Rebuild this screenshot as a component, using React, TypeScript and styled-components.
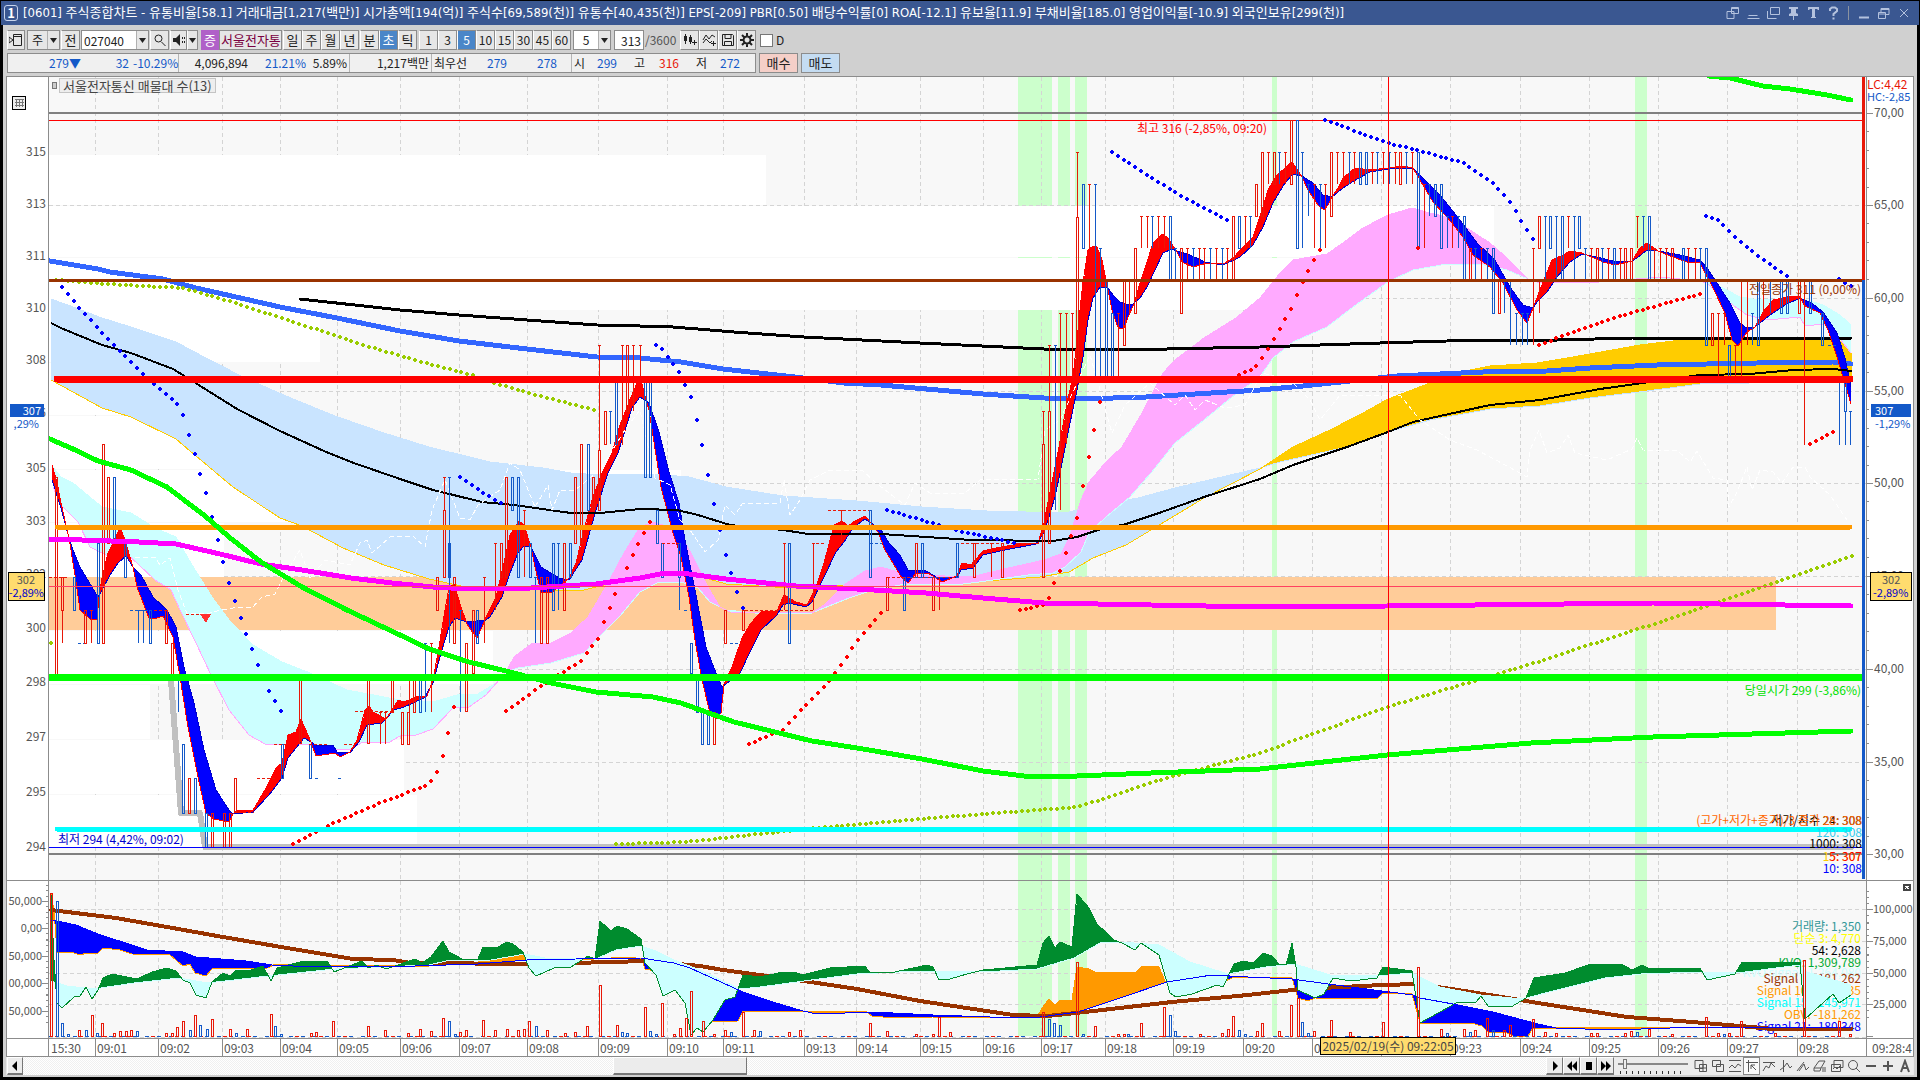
import React from "react";
import styled, { createGlobalStyle, css } from "styled-components";

/* ---------- theme ---------- */

const FONT = `"Noto Sans CJK KR", "Liberation Sans", sans-serif`;
const TITLE_FONT = `"DejaVu Sans Condensed", "Noto Sans CJK KR", sans-serif`;

const c = {
  title: "#3a5791",
  face: "#d0d0d0",
  button: "#e6e6e6",
  line: "#8c8c8c",
  up: "#e81808",
  down: "#1459c8",
  text: "#222222",
  axis: "#555555",
  plot: "#f8f8f8",
  grid: "#d4d4d4",
  active: "#4a86c8",
};

const GlobalStyle = createGlobalStyle`
  * { box-sizing: border-box; }
  body { margin: 0; background: #000; }
  button, input, select { font: inherit; color: inherit; margin: 0; padding: 0; }
`;

/* ---------- window shell ---------- */

const Shell = styled.div`
  height: 100vh;
  min-height: 480px;
  display: flex;
  flex-direction: column;
  padding: 1px 1px 3px;
  background: #000;
  color: ${c.text};
  font: 13px/16px ${FONT};
  overflow: hidden;
`;

const TitleBar = styled.header`
  display: flex;
  align-items: center;
  height: 24px;
  flex: none;
  padding: 0 8px 0 3px;
  background: ${c.title};
  color: #fff;
`;

const TitleBadge = styled.span`
  width: 14px;
  height: 16px;
  margin-right: 5px;
  border: 1px solid #c8d4ec;
  border-radius: 3px;
  text-align: center;
  line-height: 14px;
  font-weight: 700;
`;

const TitleText = styled.h1`
  flex: 1;
  min-width: 0;
  margin: 0;
  white-space: pre;
  font: 13px/20px ${TITLE_FONT};
`;

const TitleIcons = styled.div`
  display: flex;
  align-items: center;
  gap: 6px;
`;

const TitleButton = styled.button`
  display: grid;
  place-items: center;
  width: 14px;
  height: 16px;
  border: 0;
  background: none;
  color: #b4c2de;
`;

const TitleDivider = styled.span`
  width: 1px;
  height: 14px;
  margin: 0 2px;
  background: #8b93a0;
`;

const Body = styled.main`
  flex: 1;
  min-height: 0;
  display: flex;
  flex-direction: column;
  margin: 0 2px;
  padding: 5px 3px 2px;
  background: ${c.face};
`;

/* ---------- toolbar ---------- */

const Toolbar = styled.div`
  display: flex;
  flex: none;
  height: 20px;
  padding-left: 1px;
  white-space: nowrap;
`;

const Group = styled.div<{ $gap?: number }>`
  display: flex;
  margin-right: ${(p) => p.$gap ?? 1}px;
`;

const ToolButton = styled.button<{ $w?: number; $on?: boolean; $small?: boolean }>`
  display: grid;
  place-items: center;
  width: ${(p) => p.$w ?? 19}px;
  height: 20px;
  border: 1px solid ${c.line};
  border-left-color: #fff;
  background: ${(p) => (p.$on ? c.active : c.button)};
  color: ${(p) => (p.$on ? "#fff" : c.text)};
  font-size: ${(p) => (p.$small ? 12 : 13)}px;
  line-height: 18px;
`;

const Combo = styled.div<{ $w: number; $plain?: boolean }>`
  display: flex;
  width: ${(p) => p.$w}px;
  height: 20px;
  border: 1px solid ${c.line};
  background: ${(p) => (p.$plain ? c.button : "#fff")};
  font-size: 12px;
`;

const field = css`
  flex: 1;
  min-width: 0;
  width: 0;
  height: 18px;
  border: 0;
  outline: 0;
  background: transparent;
  appearance: none;
`;

const TextField = styled.input<{ $align?: string }>`
  ${field}
  padding: 0 2px;
  text-align: ${(p) => p.$align ?? "left"};
`;

const Select = styled.select`
  ${field}
  text-align: center;
  text-align-last: center;
`;

const ArrowBox = styled.span`
  display: grid;
  place-items: center;
  width: 12px;
  border-left: 1px solid #b0b0b0;
  background: ${c.button};
`;

const ArrowButton = styled(ArrowBox).attrs({ as: "button" })`
  border-width: 0 0 0 1px;
`;

const StockMark = styled.span`
  width: 18px;
  height: 20px;
  background: #b060c8;
  color: #fff;
  text-align: center;
  line-height: 20px;
`;

const StockName = styled.span`
  width: 63px;
  height: 20px;
  overflow: hidden;
  border: 1px solid ${c.line};
  padding-left: 1px;
  background: ${c.button};
  color: #7a0040;
  line-height: 18px;
`;

const CountSuffix = styled.span`
  width: 36px;
  padding-left: 1px;
  color: #555;
  font-size: 12px;
  line-height: 20px;
`;

const Check = styled.label`
  display: flex;
  align-items: center;
  gap: 3px;
  font-size: 12px;
`;

const CheckBox = styled.input`
  appearance: none;
  width: 13px;
  height: 13px;
  border: 1px solid #777;
  background: #fff;
`;

/* ---------- quote row ---------- */

const QuoteRow = styled.div`
  display: flex;
  flex: none;
  gap: 3px;
  height: 20px;
  margin: 3px 0;
  padding-left: 1px;
  white-space: nowrap;
`;

const QuoteBox = styled.div`
  display: flex;
  width: 749px;
  border: 1px solid ${c.line};
  background: #f0f0f0;
  font-size: 12px;
  line-height: 18px;
`;

const QuoteCell = styled.span<{ $w: number; $color?: string; $left?: boolean; $sep?: boolean }>`
  width: ${(p) => p.$w}px;
  color: ${(p) => p.$color ?? c.text};
  text-align: ${(p) => (p.$left ? "left" : "right")};
  padding: 0 2px;
  border-right: ${(p) => (p.$sep ? `1px solid #b4b4b4` : "0")};
`;

const OrderButton = styled.button<{ $bg: string }>`
  width: 39px;
  border: 1px solid ${c.line};
  background: ${(p) => p.$bg};
  line-height: 18px;
`;

/* ---------- chart frame ---------- */

const Frame = styled.section`
  position: relative;
  flex: 1;
  min-height: 0;
  display: grid;
  grid-template-columns: 41px minmax(0, 1fr) 46px;
  grid-template-rows: minmax(0, 803fr) minmax(0, 157fr) 17px;
  gap: 1px;
  border: 1px solid ${c.line};
  background: ${c.line};
`;

const Drawing = styled.svg<{ $bg?: string; $size?: number }>`
  display: block;
  width: 100%;
  height: 100%;
  background: ${(p) => p.$bg ?? "#fff"};
  font: ${(p) => p.$size ?? 12}px ${FONT};
`;

const TagText = styled.text`
  font-size: 11px;
`;

const AxisCorner = styled.div`
  background: #fff;
`;

const TimeAxis = styled.div<{ $columns: string }>`
  display: grid;
  grid-template-columns: ${(p) => p.$columns};
  min-width: 0;
  background: #fff;
  color: ${c.axis};
  font-size: 12px;
`;

const TimeCell = styled.span<{ $first?: boolean }>`
  min-width: 0;
  padding-left: ${(p) => (p.$first ? 2 : 1)}px;
  border-left: ${(p) => (p.$first ? "0" : `1px solid ${c.line}`)};
  line-height: 17px;
`;

const TimeEnd = styled.div`
  padding-left: 5px;
  background: #fff;
  color: ${c.axis};
  font-size: 12px;
  line-height: 17px;
`;

const CursorTime = styled.div`
  position: absolute;
  bottom: 1px;
  left: 1313px;
  width: 136px;
  height: 18px;
  border: 1px solid #000;
  background: #ffdc6e;
  color: #444;
  font-size: 12px;
  line-height: 16px;
  text-align: center;
  white-space: nowrap;
`;

/* ---------- bottom bar ---------- */

const BottomBar = styled.footer`
  display: flex;
  flex: none;
  height: 18px;
  padding: 0 1px;
  background: #e8e8e8;
`;

const BevelButton = styled.button<{ $w?: number }>`
  display: grid;
  place-items: center;
  width: ${(p) => p.$w ?? 17}px;
  height: 18px;
  border: 1px solid #fff;
  border-right-color: #777;
  border-bottom: 2px solid #777;
  background: #ececec;
  color: #000;
`;

const Track = styled.div`
  display: flex;
  flex: 1;
  min-width: 0;
  background: repeating-conic-gradient(#fff 0 25%, #f0f0f0 0 50%) 0 0 / 2px 2px;
`;

const TrackSpace = styled.div<{ $grow: number }>`
  flex: ${(p) => p.$grow} 0 0;
`;

const Thumb = styled(BevelButton)`
  flex: 132 0 0;
`;

const SliderBox = styled.label`
  display: flex;
  flex-direction: column;
  width: 78px;
  padding: 2px 4px 0;
  background: #ececec;
`;

const Slider = styled.input`
  appearance: none;
  width: 100%;
  height: 10px;
  background: linear-gradient(#888, #888) center / 100% 2px no-repeat;
  &::-webkit-slider-thumb {
    appearance: none;
    width: 4px;
    height: 10px;
    border: 1px solid #777;
    background: #eee;
  }
`;

const Ticks = styled.span`
  height: 3px;
  margin: 2px 2px 0;
  background: repeating-linear-gradient(90deg, #333 0 1px, transparent 1px 6px);
`;

const ToolIcons = styled.div`
  display: flex;
  background: #ececec;
`;

const ChartTool = styled.button<{ $on?: boolean }>`
  display: grid;
  place-items: center;
  width: 17px;
  height: 18px;
  border: ${(p) => (p.$on ? "1px solid #888" : "0")};
  background: ${(p) => (p.$on ? "#fafafa" : "transparent")};
  color: #555;
`;

/* ---------- geometry helpers ---------- */

type Pt = [number, number];

const parse = (s: string): Pt[] =>
  s
    .trim()
    .split(/\s+/)
    .map((p) => p.split(",").map(Number) as Pt);

const toPath = (pts: Pt[]) => "M" + pts.map((p) => p.join(" ")).join("L");

const valueAt = (pts: Pt[], x: number) => {
  if (x <= pts[0][0]) return pts[0][1];
  for (let i = 1; i < pts.length; i++) {
    const [x0, y0] = pts[i - 1];
    const [x1, y1] = pts[i];
    if (x <= x1) return x1 === x0 ? y1 : y0 + ((y1 - y0) * (x - x0)) / (x1 - x0);
  }
  return pts[pts.length - 1][1];
};

/* Splits the area between two lines into the part where a is above b and the rest. */
const between = (a: Pt[], b: Pt[]) => {
  const out = { above: "", below: "" };
  const start = Math.max(a[0][0], b[0][0]);
  const end = Math.min(a[a.length - 1][0], b[b.length - 1][0]);
  for (let x = start; x < end; x++) {
    const ya = Math.round(valueAt(a, x));
    const yb = Math.round(valueAt(b, x));
    if (ya === yb) continue;
    const top = Math.min(ya, yb);
    const rect = `M${x} ${top}h1V${Math.max(ya, yb)}h-1z`;
    if (ya < yb) out.above += rect;
    else out.below += rect;
  }
  return out;
};

const dotsOn = (pts: Pt[], step = 5.8): Pt[] => {
  const out: Pt[] = [];
  const last = pts[pts.length - 1][0];
  const count = Math.round((last - pts[0][0]) / step);
  for (let i = 0; i <= count; i++) {
    const x = count === 0 ? pts[0][0] : pts[0][0] + ((last - pts[0][0]) * i) / count;
    out.push([Math.round(x), Math.round(valueAt(pts, x))]);
  }
  return out;
};

/* ---------- chart data ---------- */

const TIMES: [string, number][] = [
  ["15:30", 46], ["09:01", 63], ["09:02", 64], ["09:03", 58], ["09:04", 57], ["09:05", 63],
  ["09:06", 59], ["09:07", 68], ["09:08", 71], ["09:09", 69], ["09:10", 56], ["09:11", 81],
  ["09:13", 52], ["09:14", 64], ["09:15", 63], ["09:16", 58], ["09:17", 64], ["09:18", 68],
  ["09:19", 70], ["09:20", 69], ["09:21", 69], ["09:22", 69], ["09:23", 70], ["09:24", 69],
  ["09:25", 69], ["09:26", 69], ["09:27", 70], ["09:28", 69],
];

const TIME_COLUMNS = TIMES.map(([, w]) => `minmax(0, ${w}fr)`).join(" ");

const GRID_X = TIMES.slice(0, -1).reduce<number[]>((xs, [, w]) => [...xs, (xs[xs.length - 1] ?? 49) + w], []);
const GRID_Y = [205, 298, 391, 483, 576, 669, 762];
const SUB_GRID_Y = [909, 941, 973, 1004, 1037];

const PROFILE: [number, number, number][] = [
  [155, 50, 766], [206, 51, 1494], [258, 52, 1345], [310, 52, 320], [363, 52, 200], [416, 53, 215],
  [470, 52, 681], [523, 54, 224], [631, 53, 493], [685, 54, 150], [740, 54, 404], [795, 52, 417],
];

const SIGNAL_BANDS: [number, number][] = [[1018, 34], [1058, 12], [1075, 12], [1272, 5], [1635, 12]];

const blueAvg = parse(`50,261 98,269 110,272 163,279 196,288 245,299 280,307 337,318 400,331 459,341 527,349 597,357 640,358 681,362 723,369
 795,377 844,383 881,385 983,394 1044,398 1081,399 1146,397 1260,390 1303,386 1397,376 1440,374 1483,372 1547,371 1590,368 1657,365 1757,363 1833,362 1851,364`);
const blackAvg = parse(`300,299 400,310 459,315 527,320 597,325 640,326 661,326 734,332 804,337 920,343 1044,349 1167,349 1260,347 1380,343 1480,340 1557,340 1633,338 1851,338`);
const blackMid = parse(`51,323 61,328 102,345 131,353 173,369 194,382 237,409 280,431 324,451 351,462 400,479 433,490 482,502 514,505 571,513 600,513
 640,509 677,510 698,515 730,525 783,530 808,534 881,534 971,540 1053,541 1077,537 1098,530 1126,524 1159,513 1204,497 1260,479 1293,465 1347,447
 1388,432 1413,422 1440,416 1490,405 1540,400 1600,389 1657,381 1700,375 1750,374 1793,370 1833,369 1852,371`);
const greenAvg = parse(`50,439 73,449 98,461 131,470 167,487 180,497 204,515 229,537 261,562 302,587 347,610 400,635 429,649 469,662 510,672 551,683
 596,692 653,697 681,703 706,712 734,722 775,732 812,741 857,748 922,759 983,771 1024,776 1077,776 1151,773 1260,769 1387,755 1531,743 1653,737 1851,731`);
const greenTop = parse(`1709,76 1730,78 1763,86 1790,89 1827,95 1851,100`);
const magentaAvg = parse(`49,539 82,540 139,542 176,544 220,554 261,564 302,570 351,578 392,583 433,587 469,589 531,588 596,584 640,578 665,573 689,574
 726,579 796,586 857,589 926,593 983,598 1044,603 1151,605 1260,607 1387,606 1653,603 1851,606`);

const slowTop = parse(`51,299 76,308 102,318 131,327 176,342 204,357 245,378 286,396 335,416 384,433 429,447 490,462 543,468 571,473 600,475 653,474
 689,477 726,487 783,496 857,501 922,507 987,511 1065,513 1089,507 1138,498 1175,488 1260,468 1280,462 1347,447 1388,432 1430,420 1480,411 1490,409
 1540,406 1590,398 1647,391 1700,384 1750,383 1800,380 1833,379 1852,380`);
const slowBase = parse(`51,380 73,392 102,408 131,417 176,439 190,451 233,487 280,518 302,526 343,548 384,565 429,579 461,586 506,586 539,590 580,591
 604,585 640,573 681,570 702,577 726,584 775,587 816,589 844,585 873,582 930,581 971,582 1040,577 1069,572 1081,565 1093,558 1126,545 1151,530
 1204,498 1260,469 1293,447 1330,430 1363,413 1388,399 1430,383 1460,372 1490,366 1537,363 1573,357 1640,345 1673,341 1700,337 1740,338 1800,337
 1833,338 1843,343 1852,355`);

const midSlow = parse(`53,467 61,477 73,483 102,507 131,513 155,528 176,537 192,565 212,597 229,620 253,645 282,662 310,673 347,690 400,700 433,702
 457,695 478,694 496,683 506,672 518,668 551,663 584,653 604,632 620,616 640,592 657,583 681,582 698,588 710,602 726,610 755,613 812,613 824,608 849,598
 873,590 906,584 955,585 979,582 1028,575 1053,573 1065,567 1081,552 1089,533 1106,517 1130,497 1151,473 1175,443 1204,420 1232,397 1260,377 1273,358
 1293,342 1327,327 1353,307 1388,282 1413,270 1447,264 1480,264 1507,270 1528,279 1560,281 1660,278 1707,281 1723,288 1740,297 1760,300 1800,298
 1823,305 1840,315 1851,325`);
const midFast = parse(`53,487 61,505 78,522 90,547 110,557 127,554 139,565 155,580 171,590 180,610 196,643 212,677 229,710 249,735 265,744 294,744
 310,745 339,750 351,749 363,742 388,743 400,736 416,735 433,729 453,708 469,707 486,695 506,672 514,657 531,644 551,643 571,633 588,617 608,583 624,553
 640,527 653,522 669,527 681,535 693,557 708,587 720,607 730,612 812,613 824,605 844,585 865,571 881,567 898,572 918,575 971,577 1004,569 1044,560
 1061,554 1069,538 1081,500 1089,482 1106,462 1122,447 1142,413 1163,373 1175,360 1204,338 1236,318 1260,298 1280,273 1293,260 1327,254 1340,245
 1363,228 1388,215 1412,208 1430,213 1447,217 1467,228 1490,243 1507,258 1528,279 1540,283 1600,282 1660,277 1700,281 1707,283 1717,293 1730,303 1747,315 1767,320
 1800,317 1805,326 1823,324 1833,330 1851,353`);

const fast = parse(`52,465 57,482 61,503 69,538 75,575 80,610 90,619 97,619 99,597 102,578 108,553 120,528 124,537 133,567 137,587 149,618 157,618
 163,616 173,637 180,677 188,727 198,777 206,813 214,819 229,822 233,814 237,810 253,810 265,790 276,768 282,763 288,735 296,732 301,719 311,742
 316,756 335,753 340,757 350,752 357,740 365,710 369,706 373,712 386,719 394,707 398,700 404,702 416,697 427,696 433,680 439,647 445,610 449,588
 454,584 461,607 467,624 471,630 477,638 482,627 486,617 496,597 504,563 510,535 519,521 524,525 531,547 535,567 541,592 551,593 561,585 569,578
 576,563 584,530 592,500 602,473 612,453 620,425 631,397 640,376 644,392 649,410 661,487 673,533 681,557 689,597 695,640 702,680 710,713 716,719 721,713
 724,684 732,667 742,638 751,623 761,612 777,611 784,595 796,602 807,605 816,587 824,563 834,525 842,521 848,526 855,521 865,516 871,523 878,532 885,550
 902,578 908,583 916,573 928,573 942,582 957,576 962,563 971,565 983,551 996,548 1024,543 1038,543 1044,523 1049,497 1059,447 1067,403 1073,377
 1077,340 1081,300 1083,282 1088,250 1093,246 1097,247 1102,260 1107,285 1112,310 1117,325 1120,329 1124,328 1128,317 1134,304 1140,283 1147,262
 1153,243 1162,234 1167,237 1177,252 1182,262 1193,267 1207,263 1223,264 1233,258 1247,243 1253,237 1262,210 1268,190 1277,175 1292,162 1302,177
 1308,190 1318,205 1324,210 1328,205 1332,197 1338,188 1343,178 1355,168 1370,170 1388,168 1403,166 1413,168 1420,180 1433,202 1447,217 1463,237
 1473,255 1490,267 1503,283 1517,310 1527,323 1533,308 1540,290 1552,260 1563,255 1570,251 1582,253 1603,262 1615,265 1632,261 1640,248 1647,243
 1658,251 1670,256 1687,262 1700,263 1713,288 1725,313 1732,340 1738,346 1747,332 1755,327 1763,312 1773,300 1787,297 1800,296 1804,305 1807,307
 1820,313 1828,330 1837,357 1843,377 1851,404`);
const slow = parse(`52,480 61,508 69,538 73,550 80,567 98,597 102,590 110,575 118,563 126,556 133,567 141,575 153,597 167,610 176,627 184,667 194,703
 204,750 216,790 229,810 233,814 253,812 269,795 282,778 288,758 300,743 304,738 311,742 316,745 333,745 337,752 350,753 359,742 367,725 382,723
 394,710 404,707 424,698 433,683 441,653 449,627 455,618 467,622 486,620 490,617 502,597 510,573 518,553 524,546 531,547 541,567 559,578 569,580
 582,560 596,510 608,473 618,453 632,408 640,397 649,403 659,432 669,472 679,503 685,540 695,590 706,647 716,673 722,687 740,673 751,650 761,630
 777,615 783,605 789,603 806,607 812,602 824,577 836,552 844,542 853,528 865,519 871,523 881,530 889,543 900,555 908,570 926,571 938,578 957,577
 961,570 973,568 983,555 1000,551 1036,544 1044,533 1055,497 1060,473 1068,433 1077,390 1083,357 1088,320 1093,298 1100,287 1107,287 1113,295
 1120,302 1125,304 1133,304 1140,298 1147,287 1155,270 1163,253 1172,249 1177,251 1190,255 1205,262 1223,265 1240,257 1253,245 1263,227 1273,203
 1285,183 1293,174 1302,176 1313,183 1323,195 1332,197 1343,188 1357,179 1370,172 1388,169 1413,168 1420,175 1440,195 1460,220 1477,243 1495,260
 1510,287 1523,305 1533,308 1537,302 1547,292 1557,277 1570,262 1582,254 1597,257 1613,261 1632,261 1637,258 1647,250 1658,251 1680,255 1700,260
 1707,268 1717,283 1730,303 1740,323 1745,327 1755,327 1770,315 1785,305 1800,298 1813,304 1823,312 1837,333 1845,358 1851,387`);

const laggingSpan = parse(`135,558 155,557 160,565 170,558 178,590 187,614 210,613 220,610 240,607 252,608 262,597 275,594 282,580 300,550 310,578
 325,560 350,565 360,543 367,540 372,553 390,537 413,536 425,547 432,510 445,480 460,518 470,520 478,505 500,490 510,463 520,470 535,507 548,485
 552,510 560,490 575,490 600,470 625,430 640,410 655,478 670,485 680,520 690,530 705,552 718,540 725,505 735,515 742,504 780,503 784,480 790,515
 800,500 810,480 830,470 862,470 875,482 885,490 905,505 915,483 930,493 965,493 980,480 1038,479 1045,430 1060,420 1090,355 1100,390 1112,433
 1125,405 1150,383 1175,405 1185,395 1195,410 1205,400 1225,408 1245,405 1262,373 1290,380 1310,400 1320,420 1340,395 1400,395 1420,420 1450,440 1477,450
 1507,466 1527,477 1530,450 1539,430 1547,453 1560,448 1568,435 1575,453 1607,460 1632,449 1637,438 1643,450 1678,451 1690,462 1697,451 1713,478 1727,480
 1729,507 1737,492 1747,467 1752,490 1760,470 1773,472 1782,483 1793,467 1805,467 1810,477 1830,495 1847,520`);

const blueDots = [
  "62,287 79,308 114,345 143,374 154,384 177,404 183,415 195,456 206,493 218,542 229,583 241,619 258,665 269,690 281,711",
  "460,477 477,489 501,503",
  "656,345 662,349 679,372 691,397 702,443 714,504 725,553 737,591 743,608",
  "887,510 922,520 959,531 1014,543",
  "1112,152 1147,175 1181,196 1227,220",
  "1325,120 1388,143 1424,152 1464,163 1475,171 1493,183 1510,202 1522,222 1533,239",
  "1706,216 1718,220 1735,237 1758,256 1787,276",
  "1839,279 1845,283 1851,286",
].flatMap((s) => dotsOn(parse(s)));

const redDots = [
  "239,844 273,826",
  "293,844 327,826 380,803 425,786 431,781 437,772 443,755 449,730 454,707",
  "506,711 541,686 581,661 593,645 599,638 604,622 616,593 633,554 639,543 650,522",
  "749,744 772,734 783,730 800,711 829,682 858,640 881,613",
  "1020,610 1043,605 1049,598 1054,584 1060,571 1066,552 1077,519 1083,485 1089,455 1095,427 1100,402",
  "1239,375 1256,367 1268,349 1280,328 1291,309 1302,283 1314,260 1320,250",
  "1418,248 1419,248",
  "1539,345 1573,332 1620,316 1700,294",
  "1810,444 1833,432",
]
  .slice(1)
  .flatMap((s) => dotsOn(parse(s)));

const oliveDots = [
  "51,643 52,643",
  "56,280 122,285 184,288 229,301 300,324 367,346 433,365 473,375",
  "494,383 547,398 594,410",
  "616,844 686,842 796,830 918,819 1078,807 1163,779 1260,753 1387,707 1531,664 1678,616 1852,556",
].flatMap((s) => dotsOn(parse(s)));

/* x, high, low; a trailing b marks a hollow body instead of a single stroke */
const UP_BARS = `56,477,675b 62,577,610b 62,610,643 85,610,643b 91,610,643 103,444,643b 108,477,543b 166,610,643b 172,643,677b 189,778,813b 212,813,847b
 224,813,847b 230,813,847b 235,778,812b 300,680,743b 368,680,743b 380,712,744 385,712,744 392,680,712b 402,712,744b 408,712,744b 409,680,712 414,680,712b
 431,643,712 437,577,610b 444,477,510 444,510,577b 454,577,643b 466,643,711b 473,610,673b 484,577,643 495,543,610 501,543,577b 506,477,577b 524,510,577
 541,577,643b 547,577,643b 564,543,610b 575,477,543b 581,444,543b 593,477,510b 599,345,450 599,450,510b 605,411,444b 622,345,445 627,345,411b 633,345,411
 640,345,377 714,712,744b 725,610,643b 743,610,630b 784,543,610 813,543,610 841,510,543 887,577,610b 916,543,577b 933,577,610b 939,577,610 974,543,577b
 991,543,577 1002,543,577b 1043,411,444 1043,444,577b 1049,345,411 1049,411,543b 1060,313,510 1066,313,444 1072,313,378 1077,152,217 1077,217,378b
 1089,184,248 1118,313,378 1124,281,345b 1129,281,313 1135,248,313b 1141,216,248 1147,216,248 1158,216,248 1164,216,248 1181,248,313b 1187,248,281 1199,248,281
 1204,248,281 1216,248,281 1227,248,281 1233,216,281b 1245,216,248 1256,184,216b 1262,152,216b 1268,152,184 1274,152,184b 1285,152,184 1291,120,184b
 1314,184,248 1325,184,248 1331,152,216b 1337,152,184 1343,152,184 1354,152,184 1372,152,184 1383,152,184 1395,152,184 1400,152,184b 1412,152,184
 1424,184,248 1452,216,248 1470,248,280b 1481,248,280 1499,280,313b 1533,248,345 1539,216,248b 1539,280,313 1568,216,248 1591,248,280 1597,248,280b
 1608,248,280 1620,248,280 1625,248,280b 1631,248,280b 1637,216,248 1654,248,280 1660,248,280 1666,248,280 1672,248,280b 1688,248,280 1695,248,280
 1712,313,345b 1718,313,378 1724,313,345 1735,345,378 1741,281,378 1747,281,345 1763,281,313 1799,281,313b 1804,281,445`;
const DOWN_BARS = `74,577,610b 98,543,643b 114,477,543b 125,543,577b 138,610,643 143,610,643 150,610,643b 178,677,712 183,744,813b 195,778,813b 206,813,847b
 282,744,778b 310,744,778b 420,680,712b 425,643,712 449,477,643 449,543,577b 460,610,712 477,610,643b 512,477,510b 518,477,577b 530,543,577b 535,577,643
 553,543,610b 558,543,610 570,543,577b 588,444,510b 610,411,444 616,378,444b 645,378,477b 650,378,477b 657,510,543b 662,543,577b 679,543,577b 679,577,610
 691,643,673b 697,677,712b 702,712,744b 708,712,744b 789,543,643b 870,510,577b 904,577,610b 922,543,577b 957,543,577b 1055,345,510 1083,184,248b
 1095,184,378 1100,248,378 1106,281,378b 1112,313,378b 1152,216,248 1170,216,281b 1175,248,281 1193,248,281 1210,248,281 1222,248,281 1239,216,248b
 1250,216,248 1279,152,184 1297,120,248b 1302,152,248 1308,184,216 1320,184,248 1349,152,184 1360,152,184b 1366,152,184b 1377,152,184 1389,152,184
 1406,152,184 1418,152,248b 1429,184,216 1435,184,216b 1441,184,248b 1447,216,248 1458,216,248 1464,216,281b 1475,248,281 1487,248,281 1493,248,313b
 1504,281,313 1510,281,345 1516,313,345 1522,313,345 1527,313,345 1545,216,281 1550,216,248b 1556,216,281 1562,216,281b 1574,216,281 1579,216,248b
 1585,248,281 1602,248,281 1614,248,281b 1643,216,248 1649,216,281b 1683,248,281b 1700,248,281 1706,248,345b 1729,345,378b 1752,313,345 1758,281,345b
 1770,281,313 1781,281,313b 1787,281,313b 1810,281,313b 1822,313,345b 1839,378,445 1845,378,411b 1845,411,445 1850,411,445`;

const barPath = (s: string) =>
  s
    .trim()
    .split(/\s+/)
    .map((item) => {
      const body = item.endsWith("b");
      const [x, hi, lo] = item.replace("b", "").split(",").map(Number);
      return body ? `M${x - 0.5} ${hi + 0.5}h2V${lo + 0.5}h-2z` : `M${x + 0.5} ${hi}V${lo}M${x - 1} ${hi + 0.5}h3`;
    })
    .join("");

const FLAT_UP = "M257 778.5h19M274 744.5h12M344 744.5h10M309 744.5h20M355 711.5h38M154 610.5h13M186 614.5h20M745 610.5h68M816 543.5h10M828 510.5h41M662 543.5h17M887 577.5h70M961 543.5h79M49 577.5h20M238 812.5h16";
const FLAT_DOWN = "M130 610.5h20M78 643.5h6M315 778.5h4M338 778.5h4M730 643.5h10M910 577.5h40M870 543.5h12M1828 345.5h8M1837 378.5h6M684 610.5h4";

const brownLine = parse(`51,910 116,918 167,927 223,937 281,947 353,959 393,960 411,963 536,964 647,961 700,966 723,970 804,981 857,989 920,1001 980,1010
 1013,1015 1047,1016 1076,1013 1172,1002 1248,995 1301,989 1382,985 1418,984 1471,992 1538,1003 1627,1017 1680,1021 1740,1026 1773,1029 1851,1029`);
const kvo = parse(`51,895 54,960 57,1003 62,1008 74,997 80,996 86,987 92,999 98,990 103,978 112,974 137,979 152,972 167,968 176,971 183,980 190,983
 196,995 206,998 212,982 223,973 230,976 236,970 248,971 263,966 271,981 277,968 304,961 328,962 334,972 362,961 368,968 377,965 386,969 395,966
 415,959 422,963 431,957 443,941 449,952 464,960 478,959 483,947 498,947 507,942 513,944 523,952 529,968 536,976 554,968 571,967 588,956 595,959
 600,921 611,931 617,926 627,929 641,939 645,963 656,975 663,996 675,990 685,1003 691,1035 697,1028 703,1032 713,1020 725,1000 735,997 743,975
 760,977 783,972 797,973 802,975 830,968 865,966 870,973 882,972 890,973 927,965 933,967 939,980 950,979 967,974 983,970 1037,965 1043,943 1049,936
 1055,948 1060,942 1072,947 1077,894 1089,908 1097,924 1114,940 1122,943 1135,950 1141,943 1147,947 1159,955 1170,993 1176,997 1192,994 1217,985
 1223,987 1234,964 1243,961 1253,963 1263,953 1272,956 1279,964 1286,965 1292,943 1296,967 1298,990 1315,998 1324,994 1333,978 1351,981 1377,978
 1383,967 1412,971 1420,1023 1440,1012 1458,1002 1476,1002 1481,996 1488,1006 1511,1007 1526,998 1534,978 1565,973 1591,964 1623,965 1632,970
 1642,965 1650,969 1700,968 1707,980 1735,974 1742,962 1800,962 1805,1019 1833,994 1839,1003 1851,995`);
const kvoSignal = parse(`51,981 67,986 94,989 134,983 179,978 208,983 268,976 335,969 429,965 446,961 491,960 525,954 545,958 598,958 616,950 641,946
 656,951 674,960 700,970 740,989 760,987 804,981 857,974 920,971 953,972 1000,971 1037,969 1074,958 1100,943 1122,942 1159,945 1190,962 1228,974
 1266,967 1295,964 1330,975 1377,976 1412,973 1440,987 1481,995 1522,999 1565,988 1605,978 1641,974 1700,972 1737,973 1800,965 1807,972 1851,985`);
const obv = parse(`51,894 54,910 57,952 74,953 80,955 87,953 98,953 103,948 120,950 132,954 170,955 183,966 190,964 195,973 206,976 212,969 268,968 275,964
 328,965 371,965 415,966 424,967 433,965 443,956 449,963 478,962 483,957 498,955 507,950 522,952 529,960 538,964 549,961 594,959 629,957 642,959
 645,969 656,971 663,986 675,985 685,997 692,1016 700,1017 703,1022 738,1021 743,1011 800,1011 865,1011 872,1016 893,1018 933,1017 1037,1017
 1043,1007 1049,999 1055,1005 1060,1000 1072,1000 1077,967 1089,969 1097,973 1136,972 1142,966 1159,967 1165,981 1172,982 1212,981 1223,982
 1232,978 1272,977 1292,978 1298,998 1308,1001 1315,998 1377,999 1383,993 1412,994 1420,1023 1471,1023 1482,1026 1488,1032 1505,1032 1513,1036
 1528,1036 1533,1028 1556,1028 1680,1027 1851,1028`);
const obvSignal = parse(`51,920 57,921 76,925 98,934 147,950 183,952 196,957 246,961 272,965 313,967 415,966 478,964 527,960 576,959 641,958 674,963
 690,968 743,992 773,1002 803,1011 817,1014 873,1012 933,1015 990,1017 1040,1017 1078,1012 1123,997 1167,982 1212,975 1248,977 1292,979 1328,984
 1413,995 1420,998 1453,1004 1493,1012 1538,1024 1556,1028 1614,1030 1641,1029 1700,1027 1851,1028`);

const VOL_UP = `51,143 79,6 92,21 102,13 114,3 120,5 126,5 131,6 166,3 172,3 177,9 183,15 195,21 212,17 230,7 247,7 271,22 311,3 316,4 333,15 368,10 385,6 408,3
 420,7 431,5 443,18 460,4 466,6 483,16 495,6 507,7 518,6 524,7 529,15 547,6 565,3 575,4 587,10 600,51 617,11 645,29 662,33 674,2 680,8 686,18 691,45 703,15
 714,2 725,6 743,24 754,6 789,4 800,6 870,13 887,5 916,2 933,2 939,19 950,4 1043,24 1077,74 1095,10 1118,2 1124,2 1141,13 1164,29 1200,2 1222,3 1228,7 1233,20
 1257,5 1262,13 1279,5 1291,31 1298,38 1314,5 1331,16 1350,4 1383,14 1418,69 1441,7 1464,7 1475,6 1487,18 1504,6 1510,11 1533,17 1545,4 1556,3 1591,3 1597,3
 1625,3 1631,5 1649,7 1672,2 1706,19 1718,3 1729,3 1741,15 1775,3 1804,76 1839,15 1850,2`;
const VOL_DOWN = `57,135 62,13 68,2 86,6 97,3 137,5 190,6 200,11 207,7 236,3 275,10 281,2 449,15 455,2 536,10 622,4 627,3 650,5 656,2 731,4 760,5 1049,17 1054,13
 1060,11 1083,2 1128,2 1170,21 1175,5 1239,6 1245,2 1302,14 1308,3 1447,3 1470,4 1493,6 1637,4 1724,2`;

const volPath = (s: string) =>
  parse(s)
    .map(([x, h]) => `M${x - 0.5} 1036.5v${-h}h2v${h}z`)
    .join("");

/* ---------- chart parts ---------- */

const Dots = ({ pts, color }: { pts: Pt[]; color: string }) => (
  <path d={pts.map(([x, y]) => `M${x - 2} ${y - 1}h1v-1h2v1h1v2h-1v1h-2v-1h-1z`).join("")} fill={color} />
);

const Line = ({ pts, color, w = 1, dash }: { pts: Pt[]; color: string; w?: number; dash?: string }) => (
  <path d={toPath(pts)} fill="none" stroke={color} strokeWidth={w} strokeDasharray={dash} strokeLinecap={w > 2 ? "round" : "butt"} strokeLinejoin="round" />
);

const Level = ({ y, h, color, x1 = 49, x2 = 1862 }: { y: number; h: number; color: string; x1?: number; x2?: number }) => (
  <rect x={x1} y={y} width={x2 - x1} height={h} fill={color} />
);

const Bands = ({ a, b, above, below, lineA, lineB }: { a: Pt[]; b: Pt[]; above: string; below: string; lineA: string; lineB: string }) => {
  const area = between(a, b);
  return (
    <>
      <path d={area.above} fill={above} />
      <path d={area.below} fill={below} />
      <Line pts={b} color={lineB} />
      <Line pts={a} color={lineA} />
    </>
  );
};

const GridLines = ({ ys, top, bottom }: { ys: number[]; top: number; bottom: number }) => (
  <g stroke={c.grid}>
    <path d={GRID_X.map((x) => `M${x + 0.5} ${top}V${bottom}`).join("")} strokeDasharray="4 3" />
    <path d={ys.map((y) => `M49 ${y + 0.5}H1866`).join("")} strokeDasharray="4 3" />
  </g>
);

const SignalBands = ({ top, bottom }: { top: number; bottom: number }) => (
  <g fill="#ccffcc">
    {SIGNAL_BANDS.map(([x, w]) => (
      <rect key={x} x={x} y={top} width={w} height={bottom - top} />
    ))}
  </g>
);

const PriceChart = () => (
  <Drawing $bg={c.plot} viewBox="49 77 1817 803" preserveAspectRatio="none" shapeRendering="crispEdges" role="img" aria-label="주가 차트">
    <SignalBands top={77} bottom={880} />
    <GridLines ys={GRID_Y} top={77} bottom={880} />
    {PROFILE.map(([y, h, x2]) => (
      <Level key={y} y={y} h={h} color="#ffffff" x2={x2} />
    ))}
    <path d="M49 205.5H1494" stroke={c.grid} strokeDasharray="4 3" />
    <Level y={577} h={53} color="#ffcc99" x2={1776} />
    <Level y={112} h={2} color="#808080" />
    <Level y={120} h={1} color="#ff0000" />

    <Bands a={slowBase} b={slowTop} above="#ffcc00" below="#c9e4ff" lineA="#ffcc00" lineB="#c9e4ff" />
    <Bands a={midFast} b={midSlow} above="#ffaaff" below="#ccffff" lineA="#ffaaff" lineB="#ccffff" />
    <Line pts={blueAvg} color="#3366ff" w={5} />
    <Line pts={blackAvg} color="#000" w={3} />
    <Line pts={parse("171,680 181,813 200,813 205,847 1851,847")} color="#c0c0c0" w={6} />
    <Bands a={fast} b={slow} above="#ff0000" below="#0000ff" lineA="#ff0000" lineB="#0000cc" />
    <Line pts={blackMid} color="#000" w={2} />
    <Line pts={laggingSpan} color="#fff" dash="5 3" />

    <Dots pts={oliveDots} color="#99cc00" />
    <path d={barPath(UP_BARS)} fill="none" stroke={c.up} />
    <path d={barPath(DOWN_BARS)} fill="none" stroke={c.down} />
    <path d={FLAT_UP} stroke={c.up} strokeDasharray="3 2" />
    <path d={FLAT_DOWN} stroke={c.down} strokeDasharray="3 2" />
    <Dots pts={blueDots} color="#0000ff" />
    <Dots pts={redDots} color="#ff0000" />

    <Line pts={parse("57,527 1850,527")} color="#ff9900" w={5} />
    <Line pts={magentaAvg} color="#ff00ff" w={5} />
    <Level y={586} h={1} color="#ff4060" />
    <Line pts={parse("57,379 1850,379")} color="#ff0000" w={7} />
    <Line pts={greenAvg} color="#00ff00" w={5} />
    <Line pts={greenTop} color="#00ff00" w={5} />
    <Level y={674} h={7} color="#00ff00" />
    <Line pts={parse("57,829 1850,829")} color="#00ffff" w={5} />
    <path d="M200 614h11l-5 9z" fill="#ff3030" />
    <Level y={279} h={3} color="#993300" />
    <Level y={847} h={1} color="#0000ff" />
    <Level y={853} h={2} color="#808080" />

    <text x="1137" y="133" fill="#ff0000">최고 316 (-2,85%, 09:20)</text>
    <text x="58" y="844" fill="#0000cc">최저 294 (4,42%, 09:02)</text>
    <g textAnchor="end">
      <text x="1861" y="294" fill="#993300">전일종가 311 (0,00%)</text>
      <text x="1861" y="695" fill="#00e000">당일시가 299 (-3,86%)</text>
      <text x="1862" y="825" fill="#000">저가/지수 24: 308</text>
      <text x="1862" y="825" fill="#ff6600">(고가+저가+종가)/3 종가 28: 308</text>
      <text x="1862" y="837" fill="#33ccee">120: 308</text>
      <text x="1862" y="848" fill="#000">1000: 308</text>
      <text x="1862" y="861" fill="#ffcc00">15: 307</text>
      <text x="1862" y="861" fill="#ff0000">5: 307</text>
      <text x="1862" y="873" fill="#0000ff">10: 308</text>
    </g>
    <rect x="1862" y="77" width="3" height="203" fill={c.up} />
    <rect x="1862" y="280" width="3" height="599" fill={c.down} />
    <rect x="1388" y="77" width="1" height="803" fill="#ff0000" />
  </Drawing>
);

const VolumeChart = () => (
  <Drawing $bg={c.plot} viewBox="49 881 1817 157" preserveAspectRatio="none" shapeRendering="crispEdges" role="img" aria-label="거래량 차트">
    <SignalBands top={881} bottom={1036} />
    <GridLines ys={SUB_GRID_Y} top={881} bottom={1038} />
    <g textAnchor="end">
      <text x="1861" y="931" fill="#339999">거래량: 1,350</text>
      <text x="1861" y="943" fill="#ffff00">단순 3: 4,770</text>
      <text x="1861" y="955" fill="#000">54: 2,628</text>
      <text x="1861" y="967" fill="#00aa30">KVO: 1,309,789</text>
      <text x="1861" y="977" fill="#ccffff">KVO signal: 1,264,080</text>
      <text x="1861" y="983" fill="#993300">Signal 6: -181,262</text>
      <text x="1861" y="995" fill="#ff9900">Signal 10: -163,535</text>
      <text x="1861" y="1007" fill="#00ffff">Signal 15: -145,971</text>
      <text x="1861" y="1019" fill="#ff9900">OBV: -181,262</text>
      <text x="1861" y="1031" fill="#0000ff">Signal 21: -180,348</text>
    </g>
    <Bands a={obv} b={obvSignal} above="#ff9900" below="#0000ff" lineA="#ff9900" lineB="#0000ff" />
    <Line pts={brownLine} color="#993300" w={4} />
    <Bands a={kvo} b={kvoSignal} above="#008c2e" below="#ccffff" lineA="#008c2e" lineB="#ccffff" />
    <Line pts={obvSignal} color="#0000ff" />
    <path d="M49 1036.5H1852" stroke={c.down} strokeDasharray="4 8" />
    <path d="M55 1036.5H1852" stroke={c.up} strokeDasharray="4 20" />
    <path d={volPath(VOL_UP)} fill="none" stroke={c.up} />
    <path d={volPath(VOL_DOWN)} fill="none" stroke={c.down} />
    <rect x="1388" y="881" width="1" height="157" fill="#ff0000" />
  </Drawing>
);

const LEFT_PRICES: [string, number][] = [
  ["315", 156], ["313", 208], ["311", 260], ["310", 312], ["308", 364], ["306", 417], ["305", 472],
  ["303", 525], ["302", 578], ["300", 632], ["298", 686], ["297", 741], ["295", 796], ["294", 851],
];

const PriceAxisLeft = () => (
  <Drawing viewBox="7 77 41 803" preserveAspectRatio="none" shapeRendering="crispEdges" textAnchor="end">
    <rect x="12.5" y="96.5" width="13" height="13" fill="#eee" stroke="#000" />
    <path d="M15 99.5h9M15 102.5h9M15 105.5h9M16.500 99v8M19.500 99v8M22.500 99v8" stroke="#777" />
    {LEFT_PRICES.map(([t, y]) => (
      <text key={t} x="46" y={y} fill={c.axis}>{t}</text>
    ))}
    <rect x="10" y="404" width="34" height="13" fill={c.down} />
    <TagText x="41" y="415" fill="#fff">307</TagText>
    <TagText x="39" y="428" fill={c.down}>,29%</TagText>
    <rect x="8.500" y="572.5" width="36" height="28" fill="#ffdc6e" stroke="#000" />
    <TagText x="35" y="584" fill="#555">302</TagText>
    <TagText x="44" y="597" fill="#0000cc">-2,89%</TagText>
  </Drawing>
);

const RIGHT_VALUES: [string, number][] = [
  ["70,00", 113], ["65,00", 205], ["60,00", 298], ["55,00", 391], ["50,00", 483],
  ["45,00", 576], ["40,00", 669], ["35,00", 762], ["30,00", 854],
];

const PriceAxisRight = () => (
  <Drawing viewBox="1867 77 46 803" preserveAspectRatio="none" shapeRendering="crispEdges">
    {RIGHT_VALUES.map(([t, y], i) => (
      <g key={t}>
        <path d={`M1867 ${y + 0.5}h6`} stroke={c.line} />
        {i < 8 && <path d={[18, 37, 55, 74].map((d) => `M1867 ${y + d + 0.5}h2`).join("")} stroke={c.line} />}
        <text x="1874" y={y + 4} fill={c.axis}>{t}</text>
      </g>
    ))}
    <text x="1867" y="89" fill={c.up}>LC:4,42</text>
    <TagText x="1867" y="101" fill={c.down}>HC:-2,85</TagText>
    <rect x="1871" y="404" width="40" height="13" fill={c.down} />
    <TagText x="1875" y="415" fill="#fff">307</TagText>
    <TagText x="1875" y="428" fill={c.down}>-1,29%</TagText>
    <rect x="1870.5" y="572.5" width="41" height="28" fill="#ffdc6e" stroke="#000" />
    <TagText x="1882" y="584" fill="#555">302</TagText>
    <TagText x="1873" y="597" fill="#0000cc">-2,89%</TagText>
  </Drawing>
);

const VolumeAxisLeft = () => (
  <Drawing $size={11} viewBox="7 881 41 157" preserveAspectRatio="none" shapeRendering="crispEdges" textAnchor="end">
    {([["50,000", 901], ["0,00", 928], ["50,000", 956], ["00,000", 983], ["50,000", 1011]] as [string, number][]).map(([t, y]) => (
      <g key={y}>
        <path d={`M42 ${y + 14 - 14 + 0.5}h6`} stroke={c.line} />
        <path d={[-16, -11, -5, 5, 11].map((d) => `M46 ${y + d + 0.5}h2`).join("")} stroke={c.line} />
        <text x="42" y={y + 4} fill={c.axis}>{t}</text>
      </g>
    ))}
  </Drawing>
);

const VolumeAxisRight = () => (
  <Drawing $size={11} viewBox="1867 881 46 157" preserveAspectRatio="none" shapeRendering="crispEdges">
    {([["100,000", 909], ["75,000", 941], ["50,000", 973], ["25,000", 1004]] as [string, number][]).map(([t, y]) => (
      <g key={t}>
        <path d={`M1867 ${y + 0.5}h6`} stroke={c.line} />
        <path d={[-18, -12, -6, 6, 13].map((d) => `M1867 ${y + d + 0.5}h2`).join("")} stroke={c.line} />
        <text x="1873" y={y + 4} fill={c.axis}>{t}</text>
      </g>
    ))}
    <path d="M1867 1036.5h6" stroke={c.line} />
    <rect x="1903" y="884" width="8" height="7" fill="#444" />
    <path d="M1905 886l4 3M1909 886l-4 3" stroke="#fff" />
  </Drawing>
);

/* ---------- icons ---------- */

const Glyph = ({ d, w = 14, h = 14, fill, sw = 1 }: { d: string; w?: number; h?: number; fill?: boolean; sw?: number }) => (
  <svg width={w} height={h} viewBox={`0 0 ${w} ${h}`} fill={fill ? "currentColor" : "none"} stroke={fill ? "none" : "currentColor"} strokeWidth={sw} aria-hidden="true">
    <path d={d} />
  </svg>
);

const Caret = () => <Glyph w={8} h={8} d="M0 2h7L3.500 7z" fill />;

const TITLE_ICONS: [string, string, boolean, number][] = [
  ["분리", "M1 5.500h7v7h-7zM5.500 1.500h7v6h-7zM5.500 2.500h7", false, 1],
  ["숨기기", "M2.500 9.500h9M1.500 12.500h12", false, 1],
  ["복제", "M4.500 1.500h9v7h-9zM1.500 5v7.500h9", false, 1],
  ["고정", "M3 1h9v2h-2v4l2 1v2H8v4H7v-4H3V8l2-1V3H3z", true, 1],
  ["글꼴", "M2 1h11v3h-1l-1-1H9v8h1v1H5v-1h1V3H4L3 4H2z", true, 1],
  ["도움말", "M4 5V3l2-1.500h3L11 3v2L7.500 8v2M7.500 11.500v2", false, 2],
];
const WINDOW_ICONS: [string, string, number][] = [
  ["최소화", "M2 11.500h10", 2],
  ["이전 크기", "M1.500 6.500h7v6h-7zM1.500 8h7M4 6V2.500h8v6H9M4 3.500h8", 1],
  ["닫기", "M3 3l8 8M11 3l-8 8", 1],
];

const CHART_TOOLS: [string, string][] = [
  ["창 추가", "M1 1.500h8v8h-8zM5.500 5.500h7v7h-7zM9 6v6M6 9h6"],
  ["창 겹침", "M1.500 1.500h8v6h-8zM5.500 5.500h7v7h-7z"],
  ["창 나누기", "M1 1.500h12M1 12.500h12M1 9l3-3 3 3 3-4 3 2"],
  ["십자선", "M1 3.500h12M3.500 1v12M6 6l5 5M6 10V6h4"],
  ["추세", "M1 3.500h12M1 12l3-5 3 2 2-5 4 4"],
  ["지표", "M4.500 1v12M1 11l4-3 3-4 3 5 2-2"],
  ["선", "M1 12L8 3M3 12l5-7 2 6 3-3"],
  ["모두 지우기", "M1 9l5-7h6L8 9zM1 9v3h6l1-3M10 8v5M12 8v5"],
  ["차트 저장", "M4 1.500h9v7H4zM1.500 5.500h9v7h-9zM3 10l2-2 2 2 3-3"],
  ["돋보기", "M9 9l4 4M1.500 6a4 4 0 1 0 9 0a4 4 0 1 0-9 0"],
];

/* ---------- sections ---------- */

const TITLE =
  "[0601] 주식종합차트 - 유통비율[58.1] 거래대금[1,217(백만)] 시가총액[194(억)] 주식수[69,589(천)] 유통수[40,435(천)] EPS[-209] PBR[0.50] 배당수익률[0] ROA[-12.1] 유보율[11.9] 부채비율[185.0] 영업이익률[-10.9] 외국인보유[299(천)]";

const Header = () => (
  <TitleBar>
    <TitleBadge>1</TitleBadge>
    <TitleText>{TITLE}</TitleText>
    <TitleIcons>
      {TITLE_ICONS.map(([name, d, fill, sw]) => (
        <TitleButton key={name} aria-label={name}><Glyph d={d} fill={fill} sw={sw} /></TitleButton>
      ))}
      <TitleDivider />
      {WINDOW_ICONS.map(([name, d, sw]) => (
        <TitleButton key={name} aria-label={name}><Glyph d={d} sw={sw} /></TitleButton>
      ))}
    </TitleIcons>
  </TitleBar>
);

const MainToolbar = () => (
  <Toolbar>
    <Group $gap={2}>
      <ToolButton $w={18} aria-label="패널"><Glyph d="M4.500 1.500h8v11h-8zM4.500 3.500h8M0 4l4 3-4 3z" /></ToolButton>
    </Group>
    <Group>
      <Combo $w={33} $plain>
        <Select aria-label="자산"><option>주</option></Select>
        <ArrowBox><Caret /></ArrowBox>
      </Combo>
    </Group>
    <Group><ToolButton>전</ToolButton></Group>
    <Group>
      <Combo $w={68}>
        <TextField aria-label="종목코드" defaultValue="027040" />
        <ArrowButton aria-label="종목 목록"><Caret /></ArrowButton>
      </Combo>
    </Group>
    <Group>
      <ToolButton aria-label="찾기"><Glyph d="M8.500 9l4 4M2 5.500a3.500 3.500 0 1 0 7 0a3.500 3.500 0 1 0-7 0" /></ToolButton>
    </Group>
    <Group $gap={3}>
      <ToolButton $w={17} aria-label="소리"><Glyph d="M1 5h3l4-4v12L4 9H1zM10 4h1v2h-1zM12 4h1v2h-1zM10 8h1v2h-1zM12 8h1v2h-1z" fill /></ToolButton>
      <ToolButton $w={11} aria-label="소리 설정"><Caret /></ToolButton>
    </Group>
    <Group>
      <StockMark>증</StockMark>
      <StockName>서울전자통</StockName>
    </Group>
    <Group>
      {["일", "주", "월", "년"].map((t) => <ToolButton key={t}>{t}</ToolButton>)}
    </Group>
    <Group $gap={2}>
      {["분", "초", "틱"].map((t) => <ToolButton key={t} $on={t === "초"}>{t}</ToolButton>)}
    </Group>
    <Group $gap={2}>
      {["1", "3", "5", "10", "15", "30", "45", "60"].map((t) => <ToolButton key={t} $small $on={t === "5"}>{t}</ToolButton>)}
    </Group>
    <Group $gap={3}>
      <Combo $w={38}>
        <Select aria-label="주기"><option>5</option></Select>
        <ArrowBox><Caret /></ArrowBox>
      </Combo>
    </Group>
    <Group $gap={0}>
      <Combo $w={30}><TextField aria-label="표시 봉 수" $align="right" defaultValue="313" /></Combo>
      <CountSuffix>/3600</CountSuffix>
    </Group>
    <Group $gap={4}>
      <ToolButton aria-label="봉 추가"><Glyph d="M1 3h3v5H1zM2 1h1v10H2zM6 4h3v5H6zM7 2h1v9H7zM10 9h1v-2h1v2h2v1h-2v2h-1v-2h-2V9z" fill /></ToolButton>
      <ToolButton aria-label="지표 추가"><Glyph d="M1 7l3-5 3 4 3-4 3 2M1 10l3-4 4 4 2-2M11.500 8v5M9 10.500h5" /></ToolButton>
      <ToolButton aria-label="저장"><Glyph d="M1.500 1.500h10l1 1v10h-11zM4 1.500v4h6v-4M3.500 12.500v-4h7v4" /></ToolButton>
      <ToolButton aria-label="설정"><Glyph d="M7 3.500a3.500 3.500 0 1 0 .1 0M7 0v3M7 11v3M0 7h3M11 7h3M2 2l2 2M10 10l2 2M12 2l-2 2M4 10l-2 2" sw={2} /></ToolButton>
    </Group>
    <Check><CheckBox type="checkbox" />D</Check>
  </Toolbar>
);

const Quotes = () => (
  <QuoteRow>
    <QuoteBox>
      <QuoteCell $w={75} $color={c.down}>279▼</QuoteCell>
      <QuoteCell $w={48} $color={c.down}>32</QuoteCell>
      <QuoteCell $w={48} $color={c.down} $sep>-10.29%</QuoteCell>
      <QuoteCell $w={71}>4,096,894</QuoteCell>
      <QuoteCell $w={58} $color={c.down}>21.21%</QuoteCell>
      <QuoteCell $w={42} $sep>5.89%</QuoteCell>
      <QuoteCell $w={82} $sep>1,217백만</QuoteCell>
      <QuoteCell $w={40} $left>최우선</QuoteCell>
      <QuoteCell $w={37} $color={c.down}>279</QuoteCell>
      <QuoteCell $w={50} $color={c.down}>278</QuoteCell>
      <QuoteCell $w={13} $sep />
      <QuoteCell $w={17} $left>시</QuoteCell>
      <QuoteCell $w={30} $color={c.down}>299</QuoteCell>
      <QuoteCell $w={28}>고</QuoteCell>
      <QuoteCell $w={34} $color={c.up}>316</QuoteCell>
      <QuoteCell $w={28}>저</QuoteCell>
      <QuoteCell $w={33} $color={c.down}>272</QuoteCell>
    </QuoteBox>
    <OrderButton $bg="#f5cfc8">매수</OrderButton>
    <OrderButton $bg="#c4dcf2">매도</OrderButton>
  </QuoteRow>
);

const ChartTitle = styled.div`
  position: absolute;
  top: 1px;
  left: 45px;
  display: flex;
  align-items: center;
  gap: 2px;
  color: #444;
`;

const ChartTitleMark = styled.button`
  width: 5px;
  height: 7px;
  border: 1px solid #777;
  background: #ccc;
`;

const ChartTitleText = styled.span`
  height: 15px;
  padding: 0 3px;
  border: 1px solid #c4c4c4;
  background: #eeeeee;
  line-height: 13px;
`;

const Chart = () => (
  <Frame>
    <PriceAxisLeft />
    <PriceChart />
    <PriceAxisRight />
    <VolumeAxisLeft />
    <VolumeChart />
    <VolumeAxisRight />
    <AxisCorner />
    <TimeAxis $columns={TIME_COLUMNS}>
      {TIMES.map(([t], i) => (
        <TimeCell key={t} $first={i === 0}>{t}</TimeCell>
      ))}
    </TimeAxis>
    <TimeEnd>09:28:4</TimeEnd>
    <ChartTitle>
      <ChartTitleMark aria-label="지표 선택" />
      <ChartTitleText>서울전자통신 매물대 수(13)</ChartTitleText>
    </ChartTitle>
    <CursorTime>2025/02/19(수) 09:22:05</CursorTime>
  </Frame>
);

const Bottom = () => (
  <BottomBar>
    <BevelButton $w={16} aria-label="왼쪽으로"><Glyph w={8} h={10} d="M6 0v10L1 5z" fill /></BevelButton>
    <Track>
      <TrackSpace $grow={590} />
      <Thumb aria-label="스크롤" />
      <TrackSpace $grow={800} />
    </Track>
    <BevelButton aria-label="재생"><Glyph w={8} h={10} d="M2 0v10l5-5z" fill /></BevelButton>
    <BevelButton aria-label="뒤로"><Glyph w={12} h={10} d="M6 0v10L1 5zM11 0v10L6 5z" fill /></BevelButton>
    <BevelButton aria-label="정지"><Glyph w={8} h={8} d="M1 0h6v8H1z" fill /></BevelButton>
    <BevelButton aria-label="앞으로"><Glyph w={12} h={10} d="M1 0v10l5-5zM6 0v10l5-5z" fill /></BevelButton>
    <SliderBox>
      <Slider type="range" min={0} max={100} defaultValue={8} aria-label="배율" />
      <Ticks />
    </SliderBox>
    <ToolIcons>
      {CHART_TOOLS.map(([name, d]) => (
        <ChartTool key={name} $on={name === "십자선"} aria-label={name}><Glyph d={d} /></ChartTool>
      ))}
      <ChartTool aria-label="축소"><Glyph d="M2 7h10" sw={2} /></ChartTool>
      <ChartTool aria-label="확대"><Glyph d="M2 7h10M7 2v10" sw={2} /></ChartTool>
      <ChartTool aria-label="글자"><Glyph d="M3 13L7 2l4 11M4 9h6" sw={2} /></ChartTool>
    </ToolIcons>
  </BottomBar>
);

export default function App() {
  return (
    <Shell>
      <GlobalStyle />
      <Header />
      <Body>
        <MainToolbar />
        <Quotes />
        <Chart />
        <Bottom />
      </Body>
    </Shell>
  );
}
